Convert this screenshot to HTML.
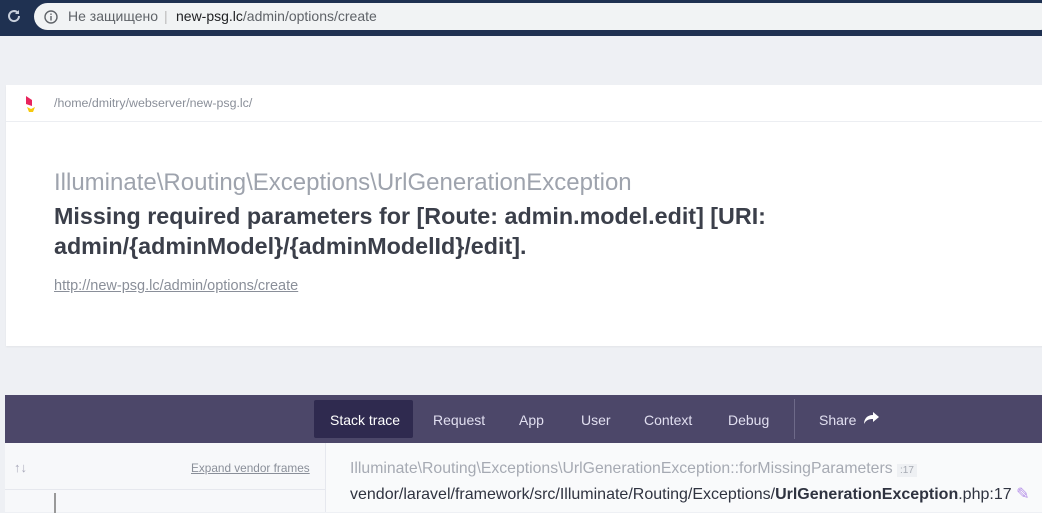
<!DOCTYPE html>
<html><head><meta charset="utf-8"><style>
*{margin:0;padding:0;box-sizing:border-box}
body{width:1042px;height:512px;overflow:hidden;background:#eef0f4;font-family:"Liberation Sans",sans-serif;position:relative}
.top{position:absolute;left:0;top:0;width:1042px;height:36px;background:#1f3151}
.url{position:absolute;left:34px;top:3px;width:1020px;height:27px;background:#f1f3f4;border-radius:14px;font-size:14px;line-height:27px;color:#5f6368}
.card{position:absolute;left:6px;top:85px;width:1040px;height:261px;background:#fff;box-shadow:0 1px 2px rgba(0,0,0,.05)}
.hdr{height:37px;border-bottom:1px solid #eceef2;font-size:12.4px;color:#8a8f99;line-height:37px;padding-left:48px;position:relative}
.nav{position:absolute;left:5px;top:395px;width:1040px;height:48px;background:#4c4769;color:#e1dff0;font-size:14px}
.nav span{position:absolute;top:17px}
.left{position:absolute;left:5px;top:443px;width:321px;height:69px;background:#f7f8fa;border-right:1px solid #e6e8ee}
.right{position:absolute;left:326px;top:443px;width:716px;height:69px;background:#f9fafb}
</style></head><body>
<div class="top">
<svg style="position:absolute;left:6px;top:8px" width="16" height="16" viewBox="0 0 16 16"><path d="M13 8a5 5 0 1 1-1.5-3.5" stroke="#c8d0dc" stroke-width="2" fill="none"/><path d="M13 2v4h-4z" fill="#c8d0dc"/></svg>
<div class="url"><svg style="position:absolute;left:10px;top:7px" width="14" height="14" viewBox="0 0 14 14"><circle cx="7" cy="7" r="6" stroke="#5f6368" stroke-width="1.4" fill="none"/><rect x="6.3" y="6" width="1.4" height="4.5" fill="#5f6368"/><rect x="6.3" y="3.5" width="1.4" height="1.4" fill="#5f6368"/></svg>
<span style="position:absolute;left:34px">Не защищено</span><span style="position:absolute;left:130px;color:#bbb">|</span><span style="position:absolute;left:142px"><span style="color:#202124">new-psg.lc</span>/admin/options/create</span></div>
</div>
<div class="card">
<div class="hdr"><svg style="position:absolute;left:18px;top:9px" width="14" height="20" viewBox="0 0 14 20"><path d="M2 2l6 4v6l-6-2z" fill="#e8245c"/><path d="M3 13l4 2 4-2-2 5H5z" fill="#f6c90e"/></svg>/home/dmitry/webserver/new-psg.lc/</div>
<div style="position:absolute;left:48px;top:84px;font-size:24px;color:#9ea3ad;white-space:nowrap">Illuminate\Routing\Exceptions\UrlGenerationException</div>
<div style="position:absolute;left:48px;top:116px;font-size:23.3px;font-weight:bold;color:#3b3f4a;line-height:30px;width:800px">Missing required parameters for [Route: admin.model.edit] [URI: admin/{adminModel}/{adminModelId}/edit].</div>
<div style="position:absolute;left:48px;top:193px;font-size:14.5px;color:#8a8f99;text-decoration:underline">http://new-psg.lc/admin/options/create</div>
</div>
<div class="nav">
<div style="position:absolute;left:309px;top:5px;width:99px;height:38px;background:#2f2a4f;border-radius:2px"></div>
<span style="left:325px;color:#fff">Stack trace</span><span style="left:428px">Request</span><span style="left:514px">App</span><span style="left:576px">User</span><span style="left:639px">Context</span><span style="left:723px">Debug</span>
<div style="position:absolute;left:789px;top:4px;width:1px;height:40px;background:#6e6a89"></div>
<span style="left:814px">Share</span>
<svg style="position:absolute;left:859px;top:17px" width="15" height="13" viewBox="0 0 15 13"><path d="M9 0l6 5-6 5V7C5 7 2 8 0 12 0 7 3 3 9 3z" fill="#fff"/></svg>
</div>
<div class="left"><span style="position:absolute;left:9px;top:17px;font-size:13px;color:#aab">↑↓</span><span style="position:absolute;left:186px;top:18px;font-size:11.8px;color:#8a8f99;text-decoration:underline">Expand vendor frames</span><div style="position:absolute;left:0;top:46px;width:321px;border-top:1px solid #e6e8ee"></div><div style="position:absolute;left:49px;top:50px;width:2px;height:20px;background:#999"></div></div>
<div class="right"><div style="position:absolute;left:24px;top:17px;font-size:15.8px;color:#a6aab3;white-space:nowrap">Illuminate\Routing\Exceptions\UrlGenerationException::forMissingParameters <span style="font-size:10px;background:#eef0f3;padding:1px 3px">:17</span></div>
<div style="position:absolute;left:24px;top:41px;font-size:16px;color:#2f3340;white-space:nowrap">vendor/laravel/framework/src/Illuminate/Routing/Exceptions/<b>UrlGenerationException</b>.php:17 <span style="color:#b48ee8">✎</span></div></div>
</body></html>
